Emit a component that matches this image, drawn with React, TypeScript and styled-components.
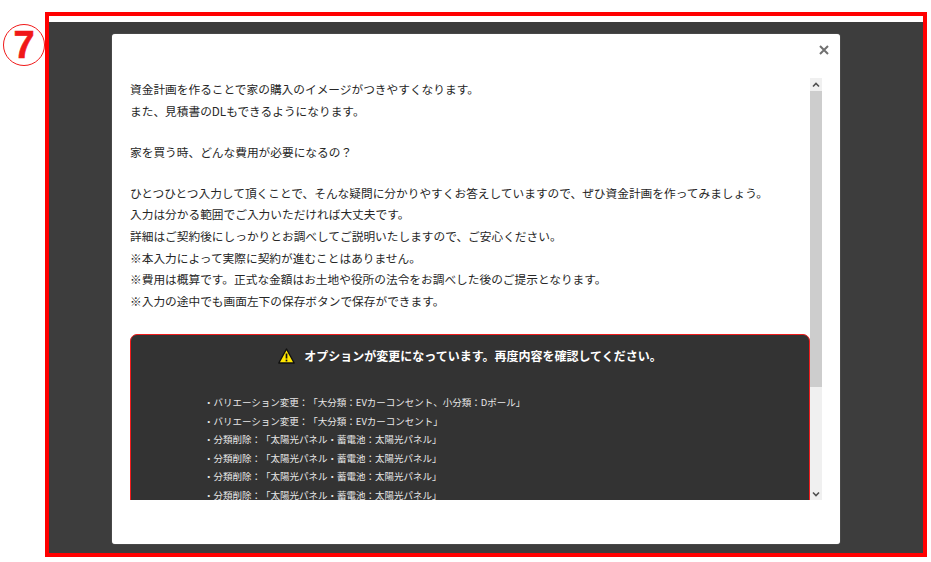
import React from 'react';
import styled, { createGlobalStyle } from 'styled-components';

const introLines = [
  '資金計画を作ることで家の購入のイメージがつきやすくなります。',
  'また、見積書のDLもできるようになります。',
  '',
  '家を買う時、どんな費用が必要になるの？',
  '',
  'ひとつひとつ入力して頂くことで、そんな疑問に分かりやすくお答えしていますので、ぜひ資金計画を作ってみましょう。',
  '入力は分かる範囲でご入力いただければ大丈夫です。',
  '詳細はご契約後にしっかりとお調べしてご説明いたしますので、ご安心ください。',
  '※本入力によって実際に契約が進むことはありません。',
  '※費用は概算です。正式な金額はお土地や役所の法令をお調べした後のご提示となります。',
  '※入力の途中でも画面左下の保存ボタンで保存ができます。',
];

const changes = [
  '・バリエーション変更：「大分類：EVカーコンセント、小分類：Dポール」',
  '・バリエーション変更：「大分類：EVカーコンセント」',
  '・分類削除：「太陽光パネル・蓄電池：太陽光パネル」',
  '・分類削除：「太陽光パネル・蓄電池：太陽光パネル」',
  '・分類削除：「太陽光パネル・蓄電池：太陽光パネル」',
  '・分類削除：「太陽光パネル・蓄電池：太陽光パネル」',
];

function App() {
  return (
    <>
      <GlobalStyle />
      <Page>
        <StepBadge>7</StepBadge>
        <Frame>
          <TopStrip />
          <Overlay>
            <Modal>
              <CloseRow>
                <CloseButton aria-label="close">
                  <svg width="10" height="10" viewBox="0 0 10 10">
                    <path d="M1 1l8 8M9 1l-8 8" stroke="#707070" strokeWidth="2" fill="none" />
                  </svg>
                </CloseButton>
              </CloseRow>
              <Scroller>
                <Content>
                  <Intro>
                    {introLines.map((line, i) => (
                      <IntroLine key={i}>{line}</IntroLine>
                    ))}
                  </Intro>
                  <Alert>
                    <AlertTitle>
                      <svg width="17" height="16" viewBox="0 0 17 16">
                        <path d="M8.5 1L16.2 15H.8z" fill="#ffe600" stroke="#111" strokeWidth="1.4" strokeLinejoin="round" />
                        <path d="M8.5 5.5v5" stroke="#111" strokeWidth="1.7" />
                        <path d="M8.5 11.6v1.8" stroke="#111" strokeWidth="1.7" />
                      </svg>
                      <span>オプションが変更になっています。再度内容を確認してください。</span>
                    </AlertTitle>
                    <ChangeList>
                      {changes.map((line, i) => (
                        <li key={i}>{line}</li>
                      ))}
                    </ChangeList>
                  </Alert>
                </Content>
                <Scrollbar>
                  <ScrollArrow>
                    <svg width="8" height="6" viewBox="0 0 8 6">
                      <path d="M1 4.5l3-3 3 3" stroke="#505050" strokeWidth="1.6" fill="none" />
                    </svg>
                  </ScrollArrow>
                  <ScrollThumb />
                  <ScrollTrack />
                  <ScrollArrow>
                    <svg width="8" height="6" viewBox="0 0 8 6">
                      <path d="M1 1.5l3 3 3-3" stroke="#505050" strokeWidth="1.6" fill="none" />
                    </svg>
                  </ScrollArrow>
                </Scrollbar>
              </Scroller>
            </Modal>
          </Overlay>
        </Frame>
      </Page>
    </>
  );
}

export default App;

const GlobalStyle = createGlobalStyle`
  html, body {
    margin: 0;
    padding: 0;
    background: #fff;
    overflow: hidden;
  }
  body {
    font-family: 'Noto Sans CJK JP', 'Noto Sans', sans-serif;
  }
`;
const Page = styled.div`
  position: relative;
  width: 931px;
  height: 562px;
  padding: 12px 4px 5px 45px;
  box-sizing: border-box;
`;
const StepBadge = styled.div`
  position: absolute;
  left: 3px;
  top: 24px;
  width: 42px;
  height: 42px;
  box-sizing: border-box;
  border: 1.5px solid #f01818;
  border-radius: 50%;
  display: flex;
  align-items: center;
  justify-content: center;
  color: #f01818;
  font-family: 'Liberation Sans', sans-serif;
  font-size: 38px;
  font-weight: 700;
  -webkit-text-stroke: 0.6px #f01818;
  line-height: 1;
`;
const Frame = styled.div`
  height: 100%;
  box-sizing: border-box;
  border: 4px solid #ff0000;
  display: flex;
  flex-direction: column;
`;
const TopStrip = styled.div`
  height: 6px;
  background: #fff;
`;
const Overlay = styled.div`
  flex: 1;
  background: #3d3d3d;
  padding: 12px 83px 9px 63px;
  min-height: 0;
`;
const Modal = styled.div`
  height: 100%;
  box-sizing: border-box;
  background: #fff;
  border-radius: 3px;
  box-shadow: 0 0 1px #aaa;
  padding: 0 18px 44px;
  display: flex;
  flex-direction: column;
`;
const CloseRow = styled.div`
  height: 44px;
  flex-shrink: 0;
  display: flex;
  justify-content: flex-end;
  padding-top: 11px;
  box-sizing: border-box;
`;
const CloseButton = styled.div`
  width: 10px;
  height: 10px;
  display: flex;
  margin-right: -7px;
`;
const Scroller = styled.div`
  flex: 1;
  min-height: 0;
  display: flex;
`;
const Content = styled.div`
  flex: 1;
  min-width: 0;
  overflow: hidden;
`;
const Intro = styled.div`
  color: #262626;
  font-size: 11.7px;
  line-height: 21.6px;
  padding-bottom: 22.6px;
`;
const IntroLine = styled.div`
  height: 21.6px;
  white-space: nowrap;
  &:empty {
    height: 19.5px;
  }
`;
const Alert = styled.div`
  background: #333;
  border: 1px solid #f01c1c;
  border-radius: 7px 7px 0 0;
  height: 300px;
  box-sizing: border-box;
`;
const AlertTitle = styled.div`
  display: flex;
  align-items: center;
  justify-content: center;
  gap: 9px;
  height: 42px;
  color: #fff;
  font-size: 12px;
  font-weight: 700;
  white-space: nowrap;
`;
const ChangeList = styled.ul`
  list-style: none;
  margin: 16px 0 0;
  padding: 0 0 0 73px;
  color: #e8e8e8;
  font-size: 9.5px;
  line-height: 18.6px;
  white-space: nowrap;
  text-spacing-trim: space-all;
`;
const Scrollbar = styled.div`
  width: 12px;
  flex-shrink: 0;
  display: flex;
  flex-direction: column;
  background: #f0f0f0;
`;
const ScrollArrow = styled.div`
  height: 13px;
  flex-shrink: 0;
  display: flex;
  align-items: center;
  justify-content: center;
`;
const ScrollThumb = styled.div`
  height: 296px;
  flex-shrink: 0;
  background: #cdcdcd;
`;
const ScrollTrack = styled.div`
  flex: 1;
`;
